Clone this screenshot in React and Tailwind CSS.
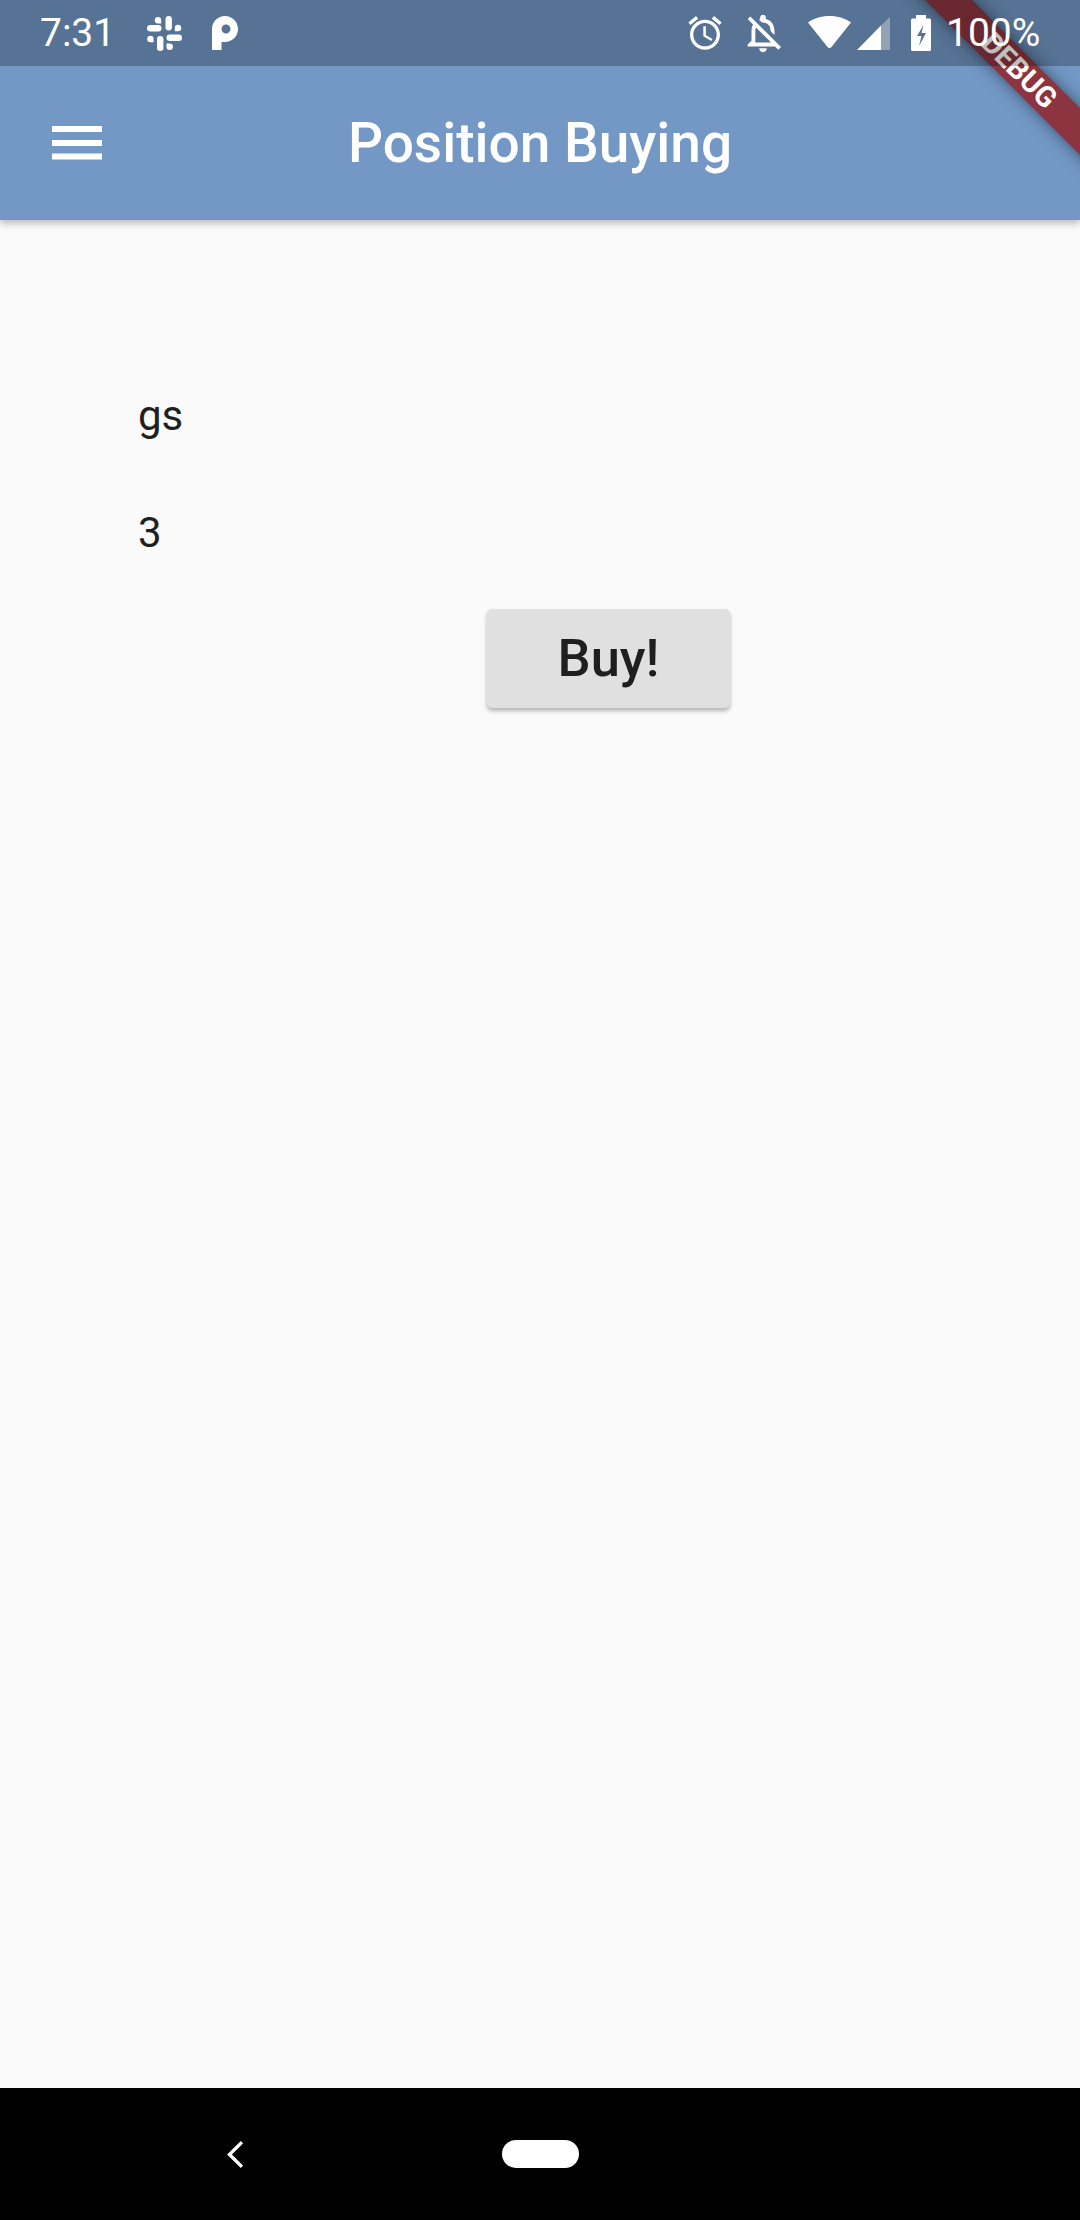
export default function App() {
  return (
    <div className="relative w-[1080px] h-[2220px] overflow-hidden flex flex-col bg-[#fafafa] font-['Roboto',sans-serif]">
      <header className="relative z-10 h-[220px] shrink-0 bg-[#7398c6] shadow-[0_3px_8px_rgba(0,0,0,0.28)] flex flex-col overflow-visible">
        <div className="absolute left-0 top-0 w-[1080px] h-[220px] overflow-hidden z-10">
          <div className="absolute left-[822px] top-[57px] w-[400px] h-[33px] rotate-45 bg-[#8c3440] shadow-[0_0_16px_rgba(0,0,0,0.5)] flex items-center justify-center">
            <span className="text-white font-bold text-[29px] leading-none mr-[8px]">DEBUG</span>
          </div>
        </div>
        <div className="relative z-20 h-[66px] shrink-0 bg-black/25 text-white text-[39px] leading-none flex items-center justify-between pl-[40px] pr-[40px]">
          <div className="flex items-center">
            <span className="w-[70px]">7:31</span>
            <svg className="ml-[37px]" width="35" height="35" viewBox="0 0 35 35" fill="white">
              <rect x="0" y="9" width="14.5" height="6.4" rx="3.2" />
              <path d="M11 1a3.2 3.2 0 0 0 0 6.4h3.2V4.2A3.2 3.2 0 0 0 11 1z" />
              <rect x="18.5" y="0" width="6.4" height="14.5" rx="3.2" />
              <path d="M31 8.8a3.2 3.2 0 0 0-3.2 3.2v3.2H31a3.2 3.2 0 0 0 0-6.4z" />
              <rect x="19.5" y="18.5" width="15.5" height="6.4" rx="3.2" />
              <path d="M19.5 27.5v3.2a3.2 3.2 0 1 0 3.2-3.2z" />
              <rect x="10" y="20" width="6.4" height="15" rx="3.2" />
              <path d="M3.4 19.8a3.2 3.2 0 0 0 0 6.4h3.2V23a3.2 3.2 0 0 0-3.2-3.2z" />
            </svg>
            <svg className="ml-[30px]" width="26" height="34" viewBox="0 0 26 34" fill="white" fillRule="evenodd">
              <path fillRule="evenodd" d="M0 13C0 5.5 6 0 13 0s13 5.5 13 13-6 13-13 13H9.5v8H0zM14 8.5a4.5 4.5 0 0 0 0 9 4.5 4.5 0 0 0 0-9z" />
            </svg>
          </div>
          <div className="flex items-center">
            <svg width="40" height="40" viewBox="0 0 24 24" fill="white">
              <path d="M22 5.72l-4.6-3.86-1.29 1.53 4.6 3.86L22 5.72zM7.88 3.39L6.6 1.86 2 5.71l1.29 1.53 4.59-3.85zM12.5 8H11v6l4.75 2.85.75-1.23-4-2.37V8zM12 4c-4.97 0-9 4.03-9 9s4.02 9 9 9c4.97 0 9-4.03 9-9s-4.03-9-9-9zm0 16c-3.87 0-7-3.13-7-7s3.13-7 7-7 7 3.13 7 7-3.13 7-7 7z" />
            </svg>
            <svg className="ml-[15px]" width="46" height="46" viewBox="0 0 24 24" fill="white">
              <path d="M12 22c1.1 0 2-.9 2-2h-4c0 1.1.9 2 2 2zm0-15.5c2.49 0 4 2.02 4 4.5v.1l2 2V11c0-3.07-1.63-5.64-4.5-6.32V4c0-.83-.67-1.5-1.5-1.5s-1.5.67-1.5 1.5v.68c-.24.06-.47.15-.69.23l1.64 1.64c.18-.02.36-.05.55-.05zM5.41 3.35L4 4.76l2.81 2.81C6.29 8.57 6 9.74 6 11v5l-2 2v1h14.24l1.74 1.74 1.41-1.41L5.41 3.35zM16 17H8v-6c0-.68.12-1.32.34-1.9L16 16.76V17z" />
            </svg>
            <svg className="ml-[22px]" width="43" height="34" viewBox="0 0 43 34" fill="white">
              <path d="M0 6.5C5.5 2.5 13 0 21.5 0S37.5 2.5 43 6.5L23.5 31c-1 1.3-3 1.3-4 0z" />
            </svg>
            <svg className="ml-[6px]" width="33" height="34" viewBox="0 0 33 34">
              <path d="M33 1v33H24V9.500z" fill="white" fillOpacity="0.35" />
              <path d="M24 9.500V34H0z" fill="white" />
            </svg>
            <svg className="ml-[21px]" width="20" height="36" viewBox="0 0 20 36" fill="white">
              <path fillRule="evenodd" d="M5 0h10v3.500h3.500A1.500 1.500 0 0 1 20 5v29.500a1.500 1.500 0 0 1-1.500 1.500h-17A1.500 1.500 0 0 1 0 34.500V5a1.500 1.500 0 0 1 1.500-1.500H5zM12.500 10L6 21h4.500l-2.500 10 7-13h-4.500z" />
            </svg>
            <span className="ml-[15px] w-[94px] text-[39px] whitespace-nowrap">100%</span>
          </div>
        </div>
        <div className="h-[154px] grid grid-cols-[1fr_auto_1fr] items-center">
          <svg className="ml-[52px]" width="50" height="34" viewBox="0 0 50 34" fill="white">
            <rect x="0" y="0" width="50" height="6" />
            <rect x="0" y="14" width="50" height="6" />
            <rect x="0" y="27.500" width="50" height="6" />
          </svg>
          <h1 className="text-white text-[55px] leading-none font-medium">Position Buying</h1>
          <div />
        </div>
      </header>

      <main className="flex-1 flex flex-col pl-[138px] pt-[166px] text-[#1f1f1f]">
        <div className="h-[60px] text-[42px] leading-[60px]">gs</div>
        <div className="mt-[57px] h-[60px] text-[42px] leading-[60px]">3</div>
        <button className="self-start ml-[349px] mt-[46px] w-[243px] h-[99px] rounded-[5px] bg-[#e0e0e0] shadow-[0_3px_4px_rgba(0,0,0,0.28)] text-[52.5px] font-medium leading-none flex items-center justify-center">
          Buy!
        </button>
      </main>

      <nav className="h-[132px] shrink-0 bg-black flex items-center pl-[227px]">
        <svg width="16" height="27" viewBox="0 0 16 27" fill="none" stroke="white" strokeWidth="3.4">
          <path d="M15 1.200L2.500 13.500 15 25.800" />
        </svg>
        <div className="ml-[259px] w-[77px] h-[28px] rounded-full bg-white" />
      </nav>
    </div>
  );
}
